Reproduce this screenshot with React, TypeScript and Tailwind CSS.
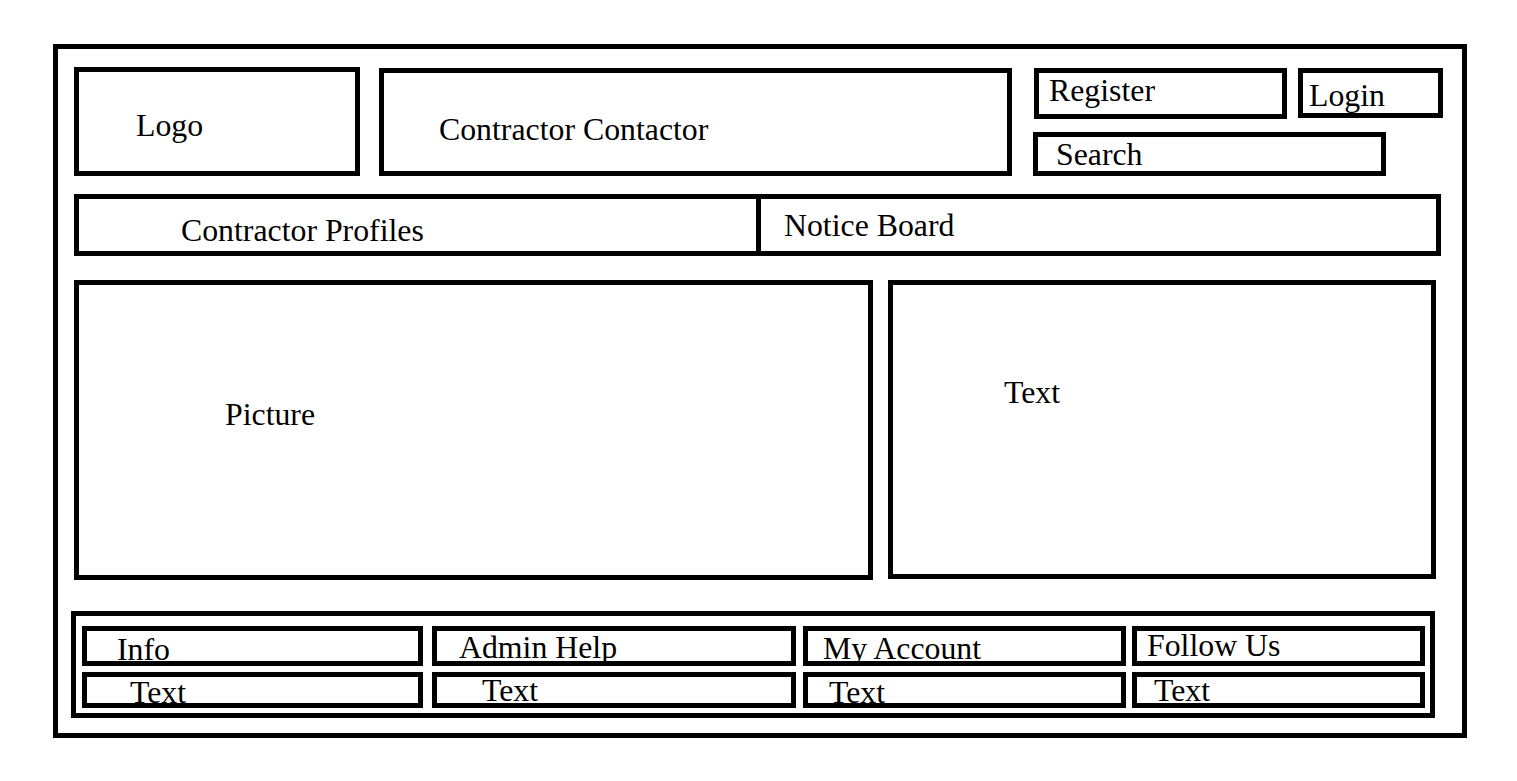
const serif = "text-[31.8px] text-black";

function Box({ className, children }: { className: string; children?: React.ReactNode }) {
  return <div className={`border-[5px] border-black ${className}`}>{children}</div>;
}

function Label({ className, children }: { className: string; children: React.ReactNode }) {
  return <div className={`${serif} whitespace-nowrap ${className}`}>{children}</div>;
}

const footerCols = [
  { title: "Info", w: "w-[341px]", mr: "mr-[9px]", tp: "pt-[7px] pl-[30px]", body: "pt-[4px] pl-[43px]" },
  { title: "Admin Help", w: "w-[364px]", mr: "mr-[7px]", tp: "pt-[5px] pl-[22px]", body: "pt-[2px] pl-[45px]" },
  { title: "My Account", w: "w-[323px]", mr: "mr-[6px]", tp: "pt-[6px] pl-[15px]", body: "pt-[4px] pl-[21px]" },
  { title: "Follow Us", w: "w-[293px]", mr: "", tp: "pt-[3px] pl-[10px]", body: "pt-[2px] pl-[17px]" },
];

export default function App() {
  return (
    <div className="min-h-screen w-full bg-white pt-[44px] pl-[53px] font-['Liberation_Serif','Times_New_Roman',serif]">
      <div className="flex h-[694px] w-[1414px] flex-col border-[5px] border-black">
        {/* header */}
        <div className="ml-[16px] mt-[18px] flex items-start">
          <Box className="h-[109px] w-[286px]">
            <Label className="pl-[57px] pt-[38px] leading-[31.5px]">Logo</Label>
          </Box>
          <Box className="ml-[19px] mt-[1px] h-[108px] w-[633px]">
            <Label className="pl-[55px] pt-[41px] leading-[31.5px]">Contractor Contactor</Label>
          </Box>
          <div className="ml-[22px] mt-[1px] flex flex-col">
            <div className="flex items-start">
              <Box className="h-[51px] w-[253px]">
                <Label className="pl-[10px] pt-[2px] leading-[31.5px]">Register</Label>
              </Box>
              <Box className="ml-[11px] h-[50px] w-[145px]">
                <Label className="pl-[6px] pt-[7px] leading-[31.5px]">Login</Label>
              </Box>
            </div>
            <Box className="-ml-[1px] mt-[13px] h-[44px] w-[353px]">
              <Label className="pl-[18px] pt-[2px] leading-[31.5px]">Search</Label>
            </Box>
          </div>
        </div>

        {/* nav */}
        <Box className="ml-[16px] mt-[18px] flex h-[62px] w-[1367px]">
          <div className="h-full w-[682px] border-r-[5px] border-black">
            <Label className="pl-[102px] pt-[16px] leading-[31.5px]">Contractor Profiles</Label>
          </div>
          <div className="flex-1">
            <Label className="pl-[23px] pt-[11px] leading-[31.5px]">Notice Board</Label>
          </div>
        </Box>

        {/* main */}
        <div className="ml-[16px] mt-[24px] flex items-start">
          <Box className="h-[300px] w-[799px]">
            <Label className="pl-[146px] pt-[114px] leading-[31.5px]">Picture</Label>
          </Box>
          <Box className="ml-[15px] h-[299px] w-[548px]">
            <Label className="pl-[111px] pt-[92px] leading-[31.5px]">Text</Label>
          </Box>
        </div>

        {/* footer */}
        <Box className="ml-[13px] mt-[31px] h-[107px] w-[1364px] pl-[6px] pt-[10px]">
          <div className="flex">
            {footerCols.map((c) => (
              <div key={c.title} className={`flex flex-col ${c.w} ${c.mr}`}>
                <Box className="h-[40px] w-full">
                  <Label className={`leading-[24px] ${c.tp}`}>{c.title}</Label>
                </Box>
                <Box className="mt-[6px] h-[36px] w-full">
                  <Label className={`leading-[24px] ${c.body}`}>Text</Label>
                </Box>
              </div>
            ))}
          </div>
        </Box>
      </div>
    </div>
  );
}
